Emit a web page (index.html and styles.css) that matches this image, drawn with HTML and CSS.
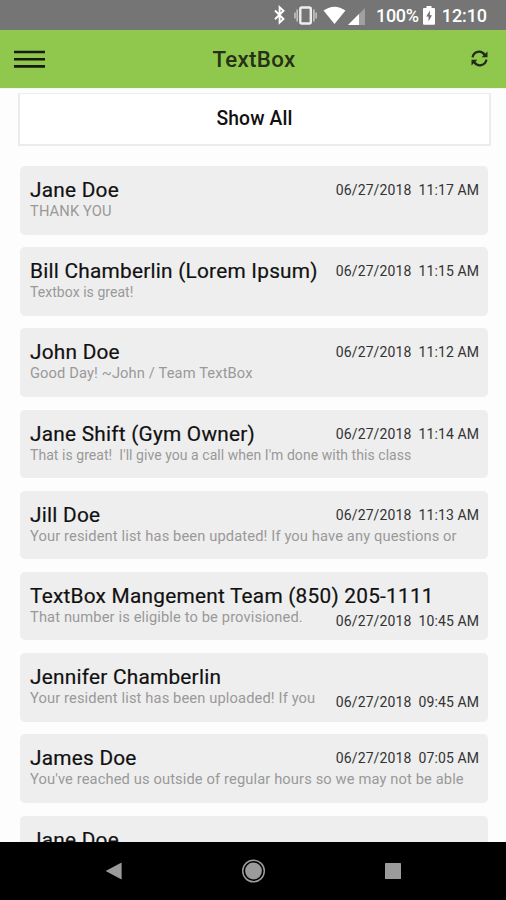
FILE: index.html
```html
<!DOCTYPE html>
<html lang="en">
<head>
<meta charset="utf-8">
<title>TextBox</title>
<link rel="stylesheet" href="styles.css">
</head>
<body>
<div class="status">
  <svg class="status-icons" width="98" height="30" viewBox="0 0 98 30">
    <path d="M3 10.500L11.500 19L7.600 22.600V7.200L11.500 10.800L3 19.200" fill="none" stroke="#fff" stroke-width="1.900"/>
    <rect x="28.300" y="7.500" width="10.500" height="16" rx="1.500" fill="none" stroke="#eee" stroke-width="2.400"/>
    <path d="M25.200 9.500v12M41.900 9.500v12M23 12.500v6M44.100 12.500v6" stroke="#c8c8c8" stroke-width="1.500"/>
    <path d="M51.500 10.500Q62.500 2.800 73.500 10.500L62.500 24Z" fill="#fff"/>
    <path d="M93 8V25H76Z" fill="#a0a0a0"/>
    <path d="M87 14V25H76Z" fill="#fff"/>
  </svg>
  <span class="percent">100%</span>
  <svg class="battery" width="12" height="30" viewBox="0 0 12 30">
    <path d="M3.500 6h5v2H11q1 0 1 1v14.500q0 1.200-1 1.200H1q-1 0-1-1.200V9q0-1 1-1h2.500Z" fill="#fff"/>
    <path d="M7 10.500L3.200 16.500H5.500V21.500L9 15.300H6.800Z" fill="#707070"/>
  </svg>
  <span class="clock">12:10</span>
</div>
<header class="bar">
  <svg width="31" height="20" viewBox="0 0 31 20"><path d="M0 3h31M0 10.200h31M0 17.400h31" stroke="#171b10" stroke-width="2.600"/></svg>
  <h1 class="title">TextBox</h1>
  <svg class="refresh" width="17" height="17" viewBox="0 0 17 17">
    <path d="M1.600 7.300A6.500 6.500 0 0 1 13.600 4.900M15.400 9.700A6.500 6.500 0 0 1 3.400 12.100" fill="none" stroke="#222a18" stroke-width="2.300"/>
    <path d="M16.500 1.500V7.300H10.600ZM.5 15.500V9.700H6.400Z" fill="#222a18"/>
  </svg>
</header>
<main class="content">
  <button class="show-all">Show All</button>
  <section class="list">
    <article class="card"><h2 class="name">Jane Doe</h2><time class="time">06/27/2018&nbsp; 11:17 AM</time><p class="preview">THANK YOU</p></article>
    <article class="card"><h2 class="name">Bill Chamberlin (Lorem Ipsum)</h2><time class="time">06/27/2018&nbsp; 11:15 AM</time><p class="preview tight">Textbox is great!</p></article>
    <article class="card"><h2 class="name">John Doe</h2><time class="time">06/27/2018&nbsp; 11:12 AM</time><p class="preview">Good Day! ~John / Team TextBox</p></article>
    <article class="card"><h2 class="name">Jane Shift (Gym Owner)</h2><time class="time">06/27/2018&nbsp; 11:14 AM</time><p class="preview tight">That is great!&nbsp; I'll give you a call when I'm done with this class</p></article>
    <article class="card"><h2 class="name">Jill Doe</h2><time class="time">06/27/2018&nbsp; 11:13 AM</time><p class="preview">Your resident list has been updated! If you have any questions or</p></article>
    <article class="card low"><h2 class="name">TextBox Mangement Team (850) 205-1111</h2><p class="preview">That number is eligible to be provisioned.</p><time class="time">06/27/2018&nbsp; 10:45 AM</time></article>
    <article class="card low"><h2 class="name">Jennifer Chamberlin</h2><p class="preview">Your resident list has been uploaded! If you</p><time class="time">06/27/2018&nbsp; 09:45 AM</time></article>
    <article class="card"><h2 class="name">James Doe</h2><time class="time">06/27/2018&nbsp; 07:05 AM</time><p class="preview">You've reached us outside of regular hours so we may not be able</p></article>
    <article class="card"><h2 class="name">Jane Doe</h2></article>
  </section>
</main>
<nav class="nav">
  <svg width="17" height="18" viewBox="0 0 17 18"><path d="M.6 9L16.600 .5V17.500Z" fill="#9b9b9b"/></svg>
  <svg width="24" height="24" viewBox="0 0 24 24"><circle cx="11.500" cy="12" r="10.800" fill="none" stroke="#9b9b9b" stroke-width="1.500"/><circle cx="11.500" cy="12" r="8.400" fill="#9b9b9b"/></svg>
  <svg width="16" height="16" viewBox="0 0 16 16"><rect width="16" height="16" rx=".6" fill="#9b9b9b"/></svg>
</nav>
</body>
</html>
```

FILE: styles.css
```css
* { box-sizing: border-box; }
body {
  margin: 0;
  height: 900px;
  overflow: hidden;
  display: flex;
  flex-direction: column;
  background: #fdfdfd;
  font-family: Roboto, "Liberation Sans", sans-serif;
  color: #111;
}
h1, h2, p { margin: 0; font-weight: 400; }
svg { display: block; flex: none; }
.status {
  flex: none;
  height: 30px;
  padding: 0 19px 0 272px;
  display: flex;
  align-items: center;
  background: #757575;
  color: #fff;
  font-size: 18px;
  font-weight: 500;
  white-space: nowrap;
}
.percent { margin-left: 6px; padding-top: 1px; width: 42px; letter-spacing: -.3px; }
.battery { margin-left: 5px; }
.clock { margin-left: auto; padding-top: 1px; letter-spacing: -.1px; }
.bar {
  flex: none;
  height: 58px;
  padding: 0 18px 0 14px;
  display: grid;
  grid-template-columns: 31px 1fr 17px;
  align-items: center;
  background: #8fc84c;
}
.title {
  padding-right: 8px;
  text-align: center;
  font-size: 22.300px;
  font-weight: 500;
  letter-spacing: .3px;
  color: #273018;
}
.refresh { margin-bottom: 2px; }
.content {
  flex: 1;
  min-height: 0;
  overflow: hidden;
  padding: 4px 15px 0 18px;
  border-top: 1px solid #f1f5ec;
}
.show-all {
  display: block;
  width: 473px;
  height: 53px;
  padding: 0 0 2px;
  border: 2px solid #e9eded;
  border-top-width: 1px;
  background: #fff;
  font: 500 19.300px Roboto, "Liberation Sans", sans-serif;
  letter-spacing: .15px;
  color: #111;
}
.list {
  padding: 20px 3px 0 2px;
  display: grid;
  grid-auto-rows: 68.500px;
  row-gap: 12.700px;
}
.card {
  padding: 11px 9px 0 10px;
  border-radius: 5px;
  background: #eee;
  display: grid;
  grid-template-columns: 1fr auto;
  grid-template-rows: 26px 16px;
  white-space: nowrap;
}
.name { font-size: 20.800px; line-height: 26px; letter-spacing: .24px; -webkit-text-stroke: .2px #111; }
.time { font-size: 14px; line-height: 26px; letter-spacing: .1px; color: #333; }
.preview { grid-column: 1 / -1; font-size: 14.700px; line-height: 16px; letter-spacing: .12px; color: #999; }
.preview.tight { font-size: 14px; letter-spacing: .05px; }
.low .name { grid-column: 1 / -1; }
.low .preview { grid-column: 1; }
.low .time { line-height: 24px; }
.nav {
  flex: none;
  height: 58px;
  padding: 0 105px 0 105px;
  display: flex;
  align-items: center;
  justify-content: space-between;
  background: #000;
}
```
